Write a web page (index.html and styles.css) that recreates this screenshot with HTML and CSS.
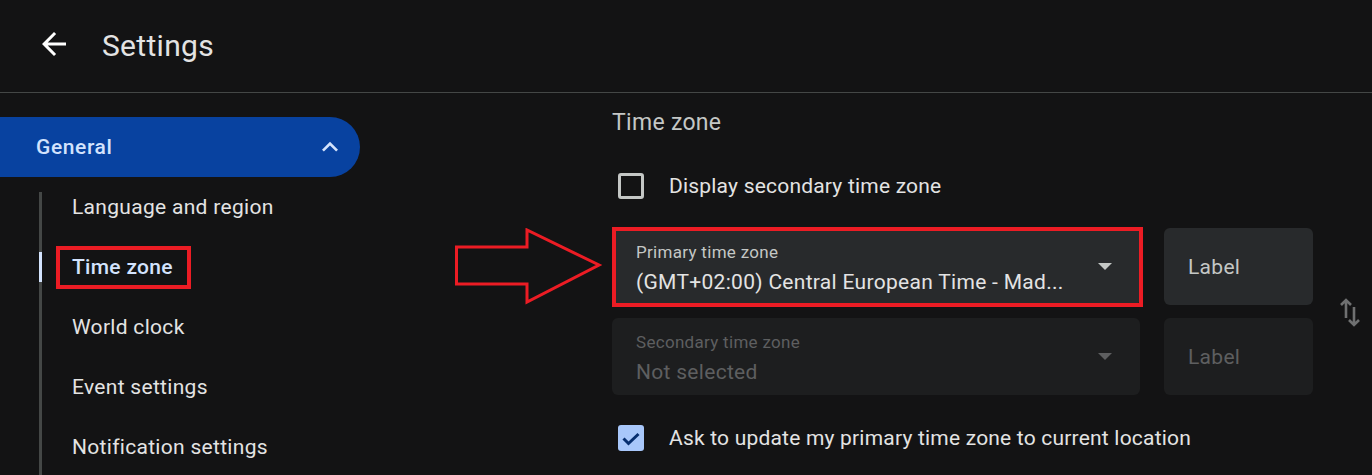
FILE: index.html
```html
<!DOCTYPE html>
<html lang="en">
  <head>
    <meta charset="utf-8" />
    <title>Settings</title>
    <link rel="stylesheet" href="styles.css">
  </head>
  <body>
    <header class="topbar">
      <button class="icon-button back-button" aria-label="Back">
        <svg viewBox="0 0 24 24" width="36" height="36"><path d="M20 11H7.83l5.59-5.59L12 4l-8 8 8 8 1.41-1.41L7.83 13H20v-2z"/></svg>
      </button>
      <h1 class="topbar-title">Settings</h1>
    </header>
    <div class="layout">
      <nav class="sidebar">
        <div class="nav-group">
          <span>General</span>
          <svg class="nav-group-chevron" viewBox="0 0 24 24" width="32" height="32"><path d="M12 8l-6 6 1.41 1.41L12 10.83l4.59 4.58L18 14z"/></svg>
        </div>
        <ul class="subnav">
          <li>Language and region</li>
          <li class="active"><span class="callout-box">Time zone</span></li>
          <li>World clock</li>
          <li>Event settings</li>
          <li>Notification settings</li>
        </ul>
      </nav>
      <main class="content">
        <h2 class="section-title">Time zone</h2>
        <label class="check-row">
          <span class="checkbox"></span>
          <span>Display secondary time zone</span>
        </label>
        <div class="tz-grid">
          <svg class="callout-arrow" viewBox="0 0 148 78" width="148" height="78">
            <polygon points="1.5,19 72,19 72,2 144,37 72,74 72,56 1.5,56" />
          </svg>
          <div class="select callout-box">
            <div class="select-label">Primary time zone</div>
            <div class="select-value">(GMT+02:00) Central European Time - Mad...</div>
            <span class="select-caret"></span>
          </div>
          <div class="label-field">Label</div>
          <!-- swap primary / secondary -->
          <svg class="swap-icon" viewBox="0 0 24 30" width="24" height="30">
            <path d="M8 21V3M3 8l5-5 5 5M16 10v18M11 23l5 5 5-5" />
          </svg>
          <div class="select disabled">
            <div class="select-label">Secondary time zone</div>
            <div class="select-value">Not selected</div>
            <span class="select-caret"></span>
          </div>
          <div class="label-field disabled">Label</div>
        </div>
        <label class="check-row">
          <span class="checkbox checked">
            <svg viewBox="0 0 26 26" width="26" height="26"><polyline points="5.5,13.5 10.5,18.5 20.5,9" /></svg>
          </span>
          <span>Ask to update my primary time zone to current location</span>
        </label>
      </main>
    </div>
  </body>
</html>
```

FILE: styles.css
```css
:root {
    --bg: #131314;
    --divider: #444746;
    --text: #e3e3e3;
    --text-muted: #c4c7c5;
    --text-disabled: #5e5f60;
    --blue-container: #0842a0;
    --blue-on-container: #d3e3fd;
    --blue-primary: #a8c7fa;
    --blue-on-primary: #062e6f;
    --field-bg: #282a2c;
    --field-bg-disabled: #1d1e1f;
    --callout: #ec1c24;
}

html, body {
    margin: 0;
    padding: 0;
    height: 100%;
    overflow: hidden;
    background: var(--bg);
    color: var(--text);
    font-family: Roboto, "Noto Sans", Arial, sans-serif;
    letter-spacing: 0.3px;
}

/* top bar */
.topbar {
    display: flex;
    align-items: center;
    height: 93px;
    border-bottom: 1px solid var(--divider);
    box-sizing: border-box;
    padding-left: 36px;
}
.icon-button {
    appearance: none;
    background: none;
    border: 0;
    padding: 0;
    display: flex;
    fill: #fff;
}
.back-button {
    margin-top: -4px;
}
.topbar-title {
    margin: 0 0 0 30px;
    font-size: 30px;
    font-weight: 400;
    color: var(--text);
    padding-bottom: 2px;
}

.layout {
    display: flex;
}

/* left navigation */
.sidebar {
    flex: 0 0 360px;
    padding-top: 24px;
}
.nav-group {
    display: flex;
    align-items: center;
    justify-content: space-between;
    height: 60px;
    padding: 0 14px 0 36px;
    background: var(--blue-container);
    border-radius: 0 30px 30px 0;
    color: var(--blue-on-container);
    font-size: 21px;
    font-weight: 500;
    letter-spacing: 0.6px;
}
.nav-group-chevron {
    fill: var(--blue-on-container);
}
.subnav {
    position: relative;
    list-style: none;
    margin: 0 0 0 39px;
    padding: 0 0 0 33px;
}
.subnav::before {
    content: "";
    position: absolute;
    left: 0;
    top: 15px;
    bottom: 0;
    width: 3px;
    background: var(--divider);
}
.subnav li {
    position: relative;
    height: 60px;
    line-height: 60px;
    font-size: 21px;
    color: var(--text);
}
.subnav li.active {
    color: var(--blue-on-container);
    font-weight: 500;
}
.subnav li.active::before {
    content: "";
    position: absolute;
    left: -33px;
    top: 15px;
    width: 3px;
    height: 30px;
    background: var(--blue-on-container);
}

/* red annotation frame */
.callout-box {
    position: relative;
}
.callout-box::after {
    content: "";
    position: absolute;
    border: 4px solid var(--callout);
    pointer-events: none;
}
.subnav .callout-box::after {
    left: -16px;
    right: -18px;
    top: -9px;
    bottom: -10px;
}
.select.callout-box::after {
    left: 0;
    right: -3px;
    top: -1px;
    bottom: -2px;
}

/* main content */
.content {
    flex: 1;
    padding: 16px 0 0 252px;
}
.section-title {
    margin: 0;
    font-size: 23px;
    font-weight: 400;
    line-height: 28px;
    color: var(--text-muted);
}
.check-row {
    display: flex;
    align-items: center;
    height: 48px;
    font-size: 21px;
    letter-spacing: 0.2px;
    color: var(--text);
}
.section-title + .check-row {
    margin-top: 25px;
}
.checkbox {
    display: flex;
    align-items: center;
    justify-content: center;
    box-sizing: border-box;
    width: 26px;
    height: 26px;
    margin: 0 25px 0 6px;
    border: 3px solid var(--text-muted);
    border-radius: 3px;
}
.checkbox.checked {
    border: 0;
    background: var(--blue-primary);
}
.checkbox.checked polyline {
    fill: none;
    stroke: var(--blue-on-primary);
    stroke-width: 3;
}

.tz-grid {
    position: relative;
    display: grid;
    grid-template-columns: 528px 149px 40px;
    grid-template-rows: 77px 77px;
    column-gap: 24px;
    row-gap: 13px;
    margin: 18px 0 19px;
}
.callout-arrow {
    position: absolute;
    left: -157px;
    top: 0;
    fill: none;
    stroke: var(--callout);
    stroke-width: 3;
}
.select {
    position: relative;
    box-sizing: border-box;
    padding: 12px 60px 0 24px;
    background: var(--field-bg);
    border-radius: 6px;
}
.select-label {
    font-size: 17px;
    line-height: 24px;
    color: var(--text-muted);
}
.select-value {
    margin-top: 4px;
    font-size: 21px;
    line-height: 28px;
    color: var(--text);
    white-space: nowrap;
}
.select-caret {
    position: absolute;
    right: 28px;
    top: 35px;
    border-left: 7px solid transparent;
    border-right: 7px solid transparent;
    border-top: 7px solid var(--text-muted);
}
.label-field {
    display: flex;
    align-items: center;
    padding-left: 24px;
    background: var(--field-bg);
    border-radius: 6px;
    font-size: 21px;
    color: var(--text-muted);
}
.select.disabled,
.label-field.disabled {
    background: var(--field-bg-disabled);
}
.select.disabled .select-label,
.select.disabled .select-value,
.label-field.disabled {
    color: var(--text-disabled);
}
.select.disabled .select-caret {
    border-top-color: var(--text-disabled);
}
.swap-icon {
    grid-column: 3;
    grid-row: 1 / span 2;
    align-self: center;
    margin-left: 1px;
    fill: none;
    stroke: #6f7071;
    stroke-width: 2.6;
}
```
